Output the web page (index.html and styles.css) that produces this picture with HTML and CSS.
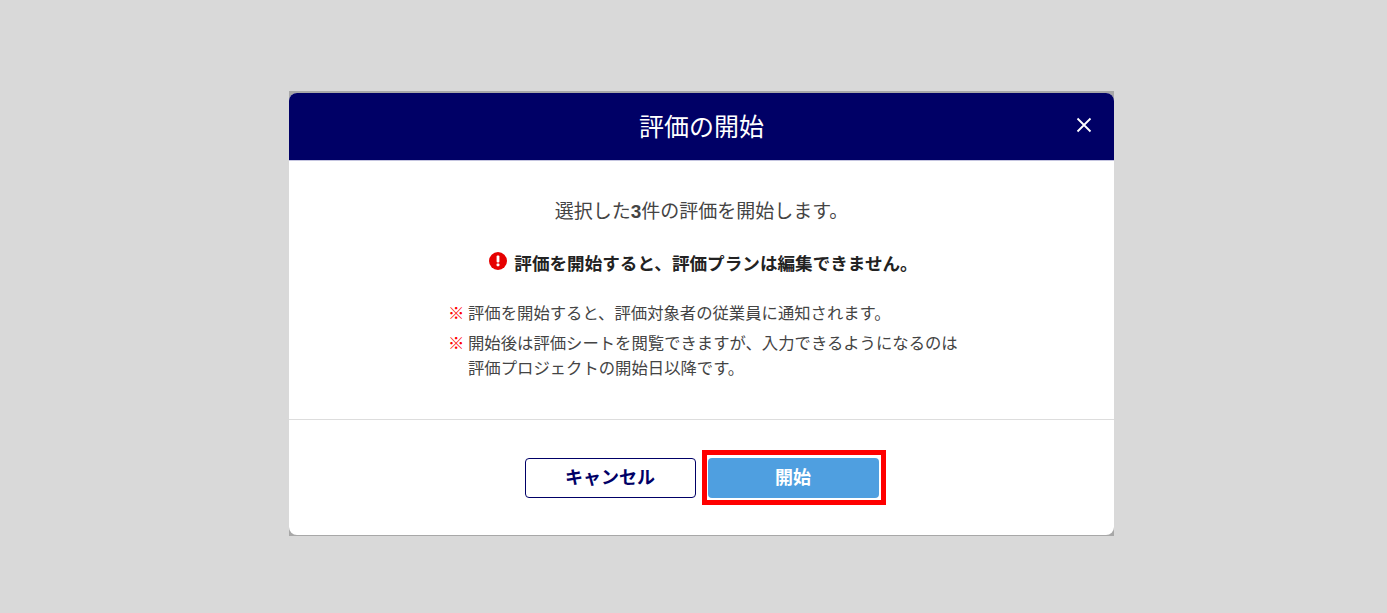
FILE: index.html
```html
<!DOCTYPE html>
<html lang="ja">
<head>
    <meta charset="UTF-8">
    <link rel="stylesheet" href="styles.css">
    <title>評価の開始</title>
</head>
<body>
    <div class="modal">
        <div class="modal-inner">
            <div class="modal-header">
                <h2>評価の開始</h2>
                <button class="close" aria-label="閉じる">
                    <svg width="16" height="16" viewBox="0 0 16 16"><path d="M1.5 1.5l13 13M14.5 1.5l-13 13" stroke="#fff" stroke-width="1.8" fill="none"/></svg>
                </button>
            </div>
            <div class="modal-body">
                <p class="lead">選択した<b>3</b>件の評価を開始します。</p>
                <p class="warning">
                    <svg width="18" height="18" viewBox="0 0 18 18"><circle cx="9" cy="9" r="9" fill="#e60000"/><rect x="7.6" y="3.6" width="2.8" height="6.8" rx="1" fill="#fff"/><rect x="7.6" y="11.6" width="2.8" height="2.6" rx="0.6" fill="#fff"/></svg>
                    <b>評価を開始すると、評価プランは編集できません。</b>
                </p>
                <ul class="notes">
                    <li>評価を開始すると、評価対象者の従業員に通知されます。</li>
                    <li>開始後は評価シートを閲覧できますが、入力できるようになるのは<br>評価プロジェクトの開始日以降です。</li>
                </ul>
            </div>
            <div class="modal-footer">
                <button class="btn btn-cancel">キャンセル</button>
                <div class="start-wrap">
                    <button class="btn btn-start">開始</button>
                    <span class="highlight"></span>
                </div>
            </div>
        </div>
    </div>
</body>
</html>
```
FILE: styles.css
```css
body {
    margin: 0;
    height: 613px;
    overflow: hidden;
    background-color: #d9d9d9;
    font-family: "Liberation Sans", "Noto Sans CJK JP", sans-serif;
    color: #444;
}

/* grey edge shows above, below and in the corners of the white box */
.modal {
    width: 825px;
    margin: 91px 0 0 289px;
    padding: 2px 0 1px;
    background: #a8a8a8;
}

.modal-inner {
    height: 442px;
    background: #fff;
    border-radius: 8px;
    display: flex;
    flex-direction: column;
}

.modal-header {
    height: 67px;
    flex-shrink: 0;
    background: #000066;
    border-radius: 8px 8px 0 0;
    box-shadow: 0 1px 0 #c5c5e0;
    color: #fff;
    display: flex;
    align-items: center;
    justify-content: center;
    position: relative;
}

.modal-header h2 {
    margin: -4px 0 0;
    font-size: 25px;
    font-weight: normal;
}

.close {
    position: absolute;
    right: 21px;
    top: 24px;
    width: 17px;
    height: 17px;
    padding: 0;
    border: none;
    background: none;
    display: flex;
}

.modal-body {
    height: 259px;
    flex-shrink: 0;
    border-bottom: 1px solid #ddd;
}

.lead {
    margin: 39px 0 0;
    font-size: 19px;
    line-height: 26px;
    text-align: center;
}

.warning {
    margin: 26px 0 0;
    padding-left: 4px;
    font-size: 17.6px;
    line-height: 26px;
    color: #222;
    display: flex;
    justify-content: center;
    align-items: center;
    gap: 7px;
}

.warning svg {
    margin-top: -6px;
}

.notes {
    list-style: none;
    margin: 24px 0 0 160px;
    padding: 0;
    font-size: 16.35px;
    line-height: 25px;
}

.notes li {
    position: relative;
    padding-left: 19px;
    margin-bottom: 5px;
}

.notes li::before {
    content: "※";
    position: absolute;
    left: -1px;
    color: #f00;
}

.modal-footer {
    flex: 1;
    display: flex;
    justify-content: center;
    gap: 12px;
    padding-top: 38px;
}

.btn {
    width: 171px;
    height: 40px;
    border-radius: 4px;
    font-family: inherit;
    font-size: 18px;
    font-weight: bold;
    padding: 0 0 4px;
}

.btn-cancel {
    background: #fff;
    border: 1px solid #000066;
    color: #000066;
}

.start-wrap {
    position: relative;
    height: 40px;
}

.btn-start {
    background: #4f9fe0;
    border: none;
    color: #fff;
}

.highlight {
    position: absolute;
    top: -8px;
    left: -6px;
    right: -7px;
    bottom: -7px;
    border: 5px solid #f00;
}
```
